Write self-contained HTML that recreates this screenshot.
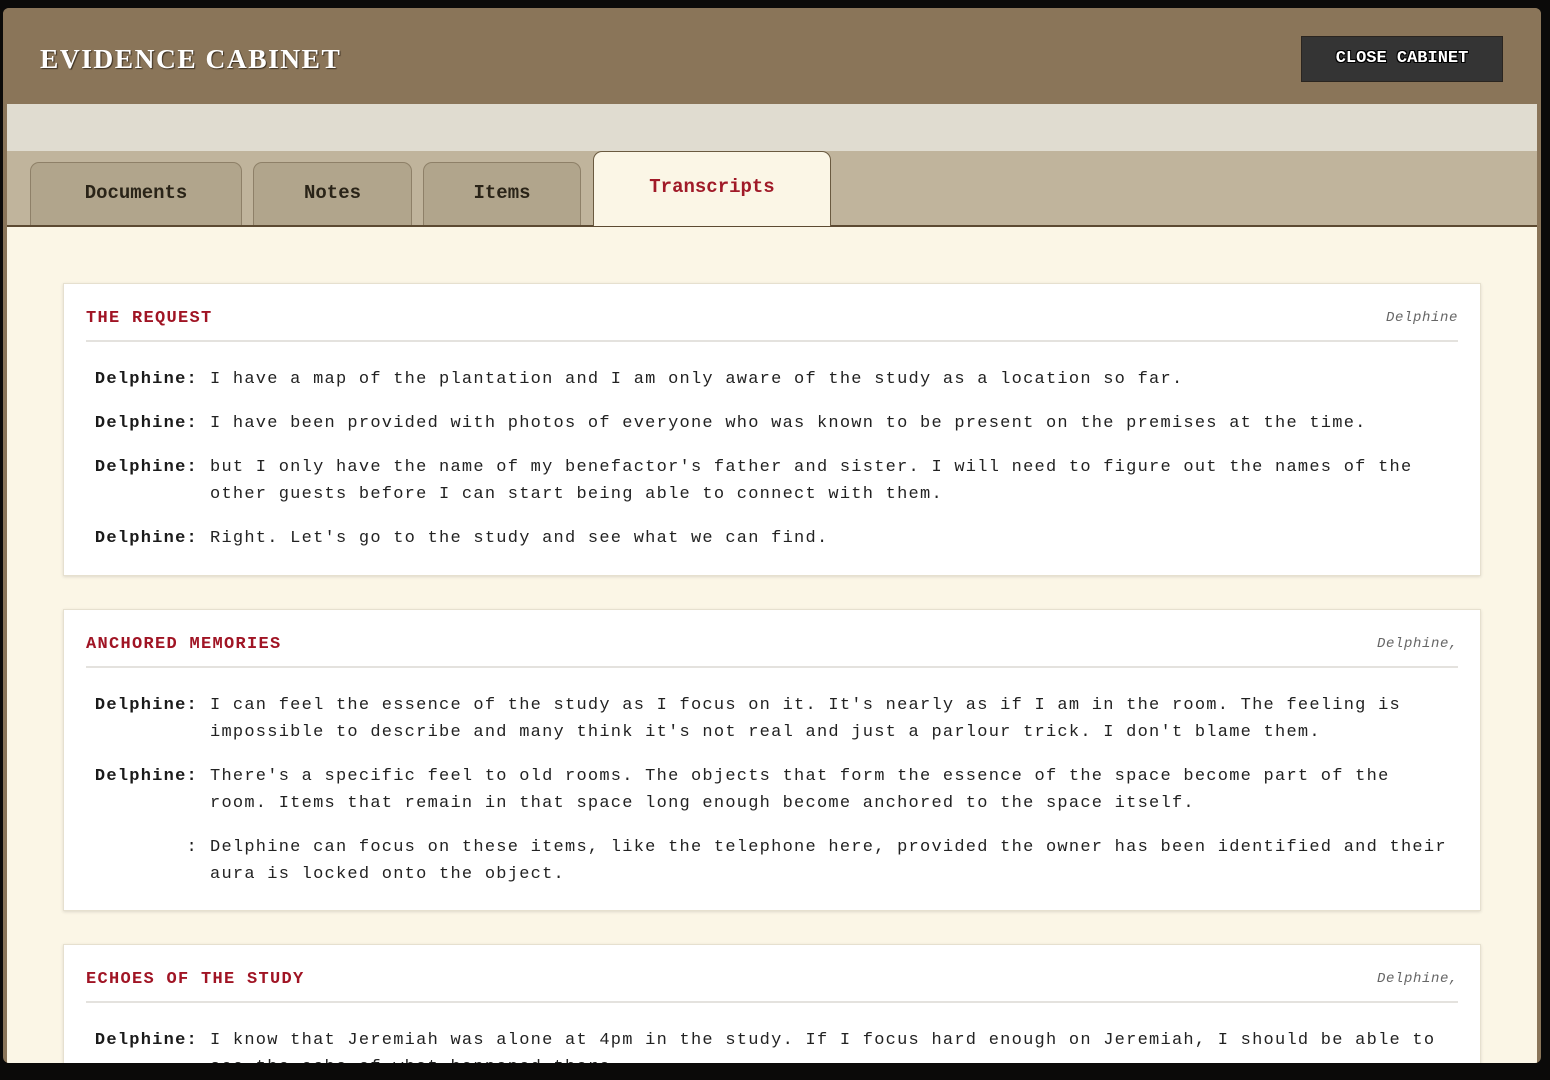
<!DOCTYPE html>
<html><head><meta charset="utf-8"><style>
*{box-sizing:border-box;margin:0;padding:0}
html,body{width:1550px;height:1080px;background:#0b0a09;overflow:hidden}
.modal{position:absolute;left:3px;top:8px;width:1538px;height:1055px;background:#8a7559;border-radius:6px;overflow:hidden}
.hdr{position:absolute;left:0;top:0;width:1538px;height:96px;background:#8a7559}
.hdr h1{position:absolute;left:37px;top:35px;font:bold 27.5px "Liberation Serif",serif;color:#fff;letter-spacing:1.5px;text-shadow:1px 1px 1px #3a2e20}
.close{position:absolute;left:1298px;top:28px;width:202px;height:46px;background:#343434;border:1px solid #2a2520;color:#fff;font:bold 17px "Liberation Mono",monospace;text-align:center;line-height:44px;text-shadow:1px 1px 0 #000,-1px -1px 0 #000,1px -1px 0 #000,-1px 1px 0 #000}
.strip{position:absolute;left:4px;top:96px;width:1530px;height:47px;background:#e0dcd0}
.tabbar{position:absolute;left:4px;top:143px;width:1530px;height:76px;background:#c0b49c;border-bottom:2px solid #5c4a32}
.tab{position:absolute;top:11px;height:63px;background:#b1a58c;border:1px solid #8e8068;border-bottom:none;border-radius:9px 9px 0 0;font:bold 19px "Liberation Mono",monospace;color:#2a2418;text-align:center;line-height:60px}
.tab.act{top:0;height:75px;background:#fbf6e6;border-color:#6a5a40;color:#a01a28;line-height:70px}
.content{position:absolute;left:4px;top:219px;width:1530px;height:836px;background:#fbf6e6;overflow:hidden}
.card{position:absolute;left:56px;width:1418px;background:#fff;border:1px solid #e6e0cf;box-shadow:0 1px 3px rgba(0,0,0,.12);padding:0 22px}
.ch{height:58px;border-bottom:2px solid #e4e2de;position:relative}
.ch b{position:absolute;left:0;top:25px;font:bold 17px "Liberation Mono",monospace;color:#a01424;letter-spacing:1.3px}
.ch i{position:absolute;right:0;top:26px;font:italic 14px "Liberation Mono",monospace;color:#666;letter-spacing:.6px}
.rows{padding-top:24px}
.r{display:flex;font:17px/27px "Liberation Mono",monospace;letter-spacing:1.25px;color:#222;margin-bottom:17px}
.r .s{width:124px;flex:none;text-align:right;font-weight:bold;padding-right:12px;color:#1a1a1a}
.r .s.n{font-weight:normal}
.r .t{flex:1}
</style></head><body>
<div class="modal">
<div class="hdr"><h1>EVIDENCE CABINET</h1><div class="close">CLOSE CABINET</div></div>
<div class="strip"></div>
<div class="tabbar">
<div class="tab" style="left:23px;width:212px">Documents</div>
<div class="tab" style="left:246px;width:159px">Notes</div>
<div class="tab" style="left:416px;width:158px">Items</div>
<div class="tab act" style="left:586px;width:238px">Transcripts</div>
</div>
<div class="content">
<div class="card" style="top:56px;height:293px">
<div class="ch"><b>THE REQUEST</b><i>Delphine</i></div>
<div class="rows">
<div class="r"><div class="s">Delphine:</div><div class="t">I have a map of the plantation and I am only aware of the study as a location so far.</div></div>
<div class="r"><div class="s">Delphine:</div><div class="t">I have been provided with photos of everyone who was known to be present on the premises at the time.</div></div>
<div class="r"><div class="s">Delphine:</div><div class="t">but I only have the name of my benefactor's father and sister. I will need to figure out the names of the other guests before I can start being able to connect with them.</div></div>
<div class="r"><div class="s">Delphine:</div><div class="t">Right. Let's go to the study and see what we can find.</div></div>
</div></div>
<div class="card" style="top:382px;height:302px">
<div class="ch"><b>ANCHORED MEMORIES</b><i>Delphine,</i></div>
<div class="rows">
<div class="r"><div class="s">Delphine:</div><div class="t">I can feel the essence of the study as I focus on it. It's nearly as if I am in the room. The feeling is impossible to describe and many think it's not real and just a parlour trick. I don't blame them.</div></div>
<div class="r"><div class="s">Delphine:</div><div class="t">There's a specific feel to old rooms. The objects that form the essence of the space become part of the room. Items that remain in that space long enough become anchored to the space itself.</div></div>
<div class="r"><div class="s n">:</div><div class="t">Delphine can focus on these items, like the telephone here, provided the owner has been identified and their aura is locked onto the object.</div></div>
</div></div>
<div class="card" style="top:717px;height:200px">
<div class="ch"><b>ECHOES OF THE STUDY</b><i>Delphine,</i></div>
<div class="rows">
<div class="r"><div class="s">Delphine:</div><div class="t">I know that Jeremiah was alone at 4pm in the study. If I focus hard enough on Jeremiah, I should be able to see the echo of what happened there.</div></div>
</div></div>
</div>
</div>
</body></html>
